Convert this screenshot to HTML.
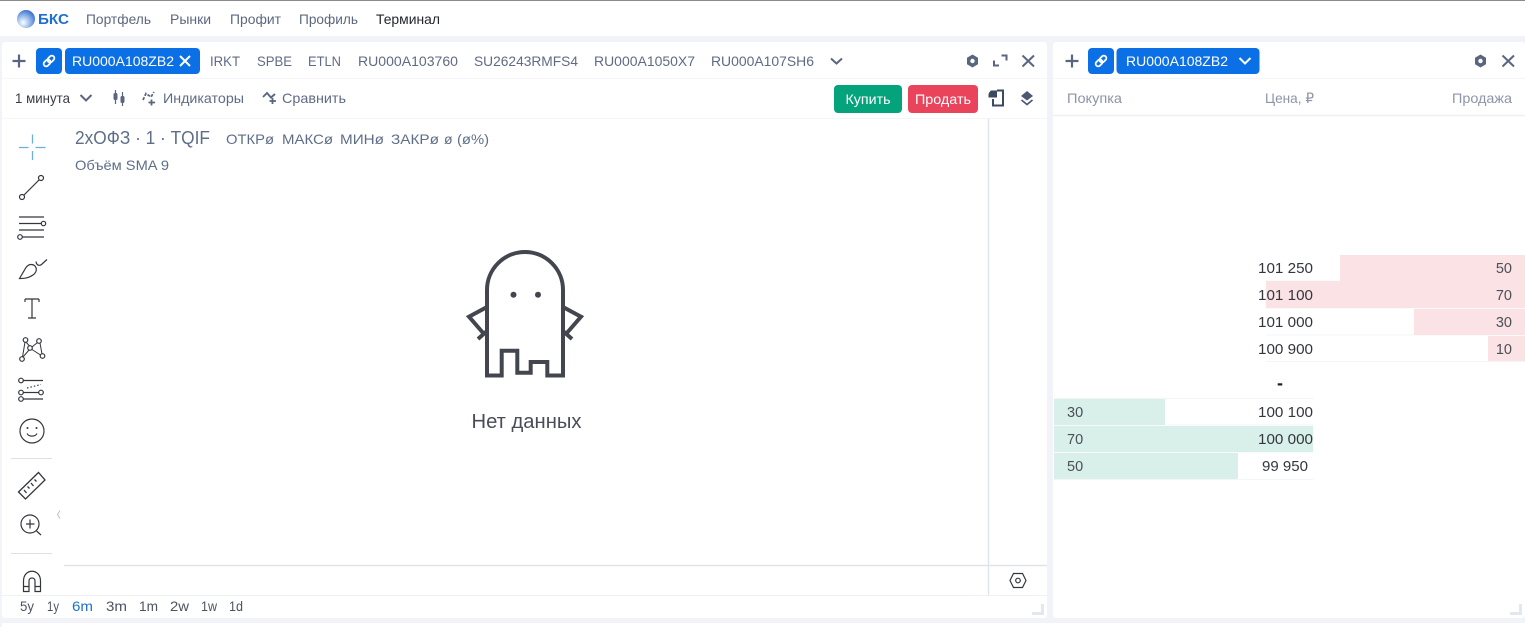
<!DOCTYPE html>
<html lang="ru"><head><meta charset="utf-8"><title>Терминал</title>
<style>
html,body{margin:0;padding:0;background:#f1f3f8;width:1525px;height:627px;overflow:hidden}
svg{display:block;position:absolute;left:0;top:0}
text{font-family:"Liberation Sans","DejaVu Sans",sans-serif;dominant-baseline:alphabetic}
.n{font-size:14px;fill:#5d6880}
.t{font-size:14px;fill:#5f6b85}
.w{font-size:14px;fill:#fff}
.h{font-size:14px;fill:#8b94a8}
.p{font-size:15px;fill:#33363d}
.q{font-size:14.5px;fill:#4b4f57}
.f{font-size:14px;fill:#4c5362}
.l{font-size:14px;fill:#5f6e88}
.ic{fill:none;stroke:#33363d;stroke-width:1.2}
.ui{fill:none;stroke:#5a6680;stroke-width:2}
</style></head><body>
<svg width="1525" height="627" viewBox="0 0 1525 627" xmlns="http://www.w3.org/2000/svg">
<defs><radialGradient id="g" cx="0.35" cy="0.7" r="0.8"><stop offset="0" stop-color="#fff"/><stop offset="0.5" stop-color="#8fb4ea"/><stop offset="1" stop-color="#2a62c4"/></radialGradient></defs>
<rect width="1525" height="627" fill="#f1f3f8"/>
<rect width="1525" height="36" fill="#fff"/><rect width="1525" height="1" fill="#8a8a8a"/>
<circle cx="26" cy="19" r="9" fill="url(#g)"/>
<text x="38" y="24" font-size="14.5" font-weight="700" fill="#1f6fd0" textLength="31" lengthAdjust="spacingAndGlyphs">БКС</text>
<text class="n" x="86" y="24" textLength="65" lengthAdjust="spacingAndGlyphs">Портфель</text>
<text class="n" x="170" y="24" textLength="41" lengthAdjust="spacingAndGlyphs">Рынки</text>
<text class="n" x="230" y="24" textLength="51" lengthAdjust="spacingAndGlyphs">Профит</text>
<text class="n" x="299" y="24" textLength="59" lengthAdjust="spacingAndGlyphs">Профиль</text>
<text x="376" y="24" font-size="14" fill="#24272e" textLength="64" lengthAdjust="spacingAndGlyphs">Терминал</text>

<rect x="2" y="42" width="1045" height="576" rx="3" fill="#fff"/>
<rect x="1053" y="42" width="472" height="576" rx="3" fill="#fff"/>
<rect x="2" y="623" width="1523" height="4" fill="#fff"/>
<path d="M2 78.5H1047M2 118.5H1047M1053 78.5H1525" stroke="#f3f5f9"/>
<path d="M1053 115.5H1525" stroke="#eef0f5" stroke-width="1.5"/>
<path d="M988.5 119V595M64 565.5H1047" stroke="#dfe4ec" stroke-width="1.4"/>
<path d="M2 595.5H1047" stroke="#eef1f5"/>

<!-- left tabs -->
<path d="M19 54.5V67.5M12.5 61H25.5" stroke="#5a6680" stroke-width="2.2"/>
<rect x="36" y="48" width="26" height="26" rx="4" fill="#0b6fe6"/>
<g transform="rotate(-45 49 61)" fill="none" stroke="#fff" stroke-width="1.8"><rect x="42.500" y="58.500" width="7.500" height="5" rx="2.500"/><rect x="48" y="58.500" width="7.500" height="5" rx="2.500"/></g>
<rect x="65" y="48" width="135" height="26" rx="4" fill="#0b6fe6"/>
<text class="w" x="72" y="66" textLength="102" lengthAdjust="spacingAndGlyphs">RU000A108ZB2</text>
<path d="M180 56L190 66M190 56L180 66" stroke="#fff" stroke-width="2"/>
<text class="t" x="210" y="66" textLength="30" lengthAdjust="spacingAndGlyphs">IRKT</text>
<text class="t" x="257" y="66" textLength="35" lengthAdjust="spacingAndGlyphs">SPBE</text>
<text class="t" x="308" y="66" textLength="33" lengthAdjust="spacingAndGlyphs">ETLN</text>
<text class="t" x="358" y="66" textLength="100" lengthAdjust="spacingAndGlyphs">RU000A103760</text>
<text class="t" x="474" y="66" textLength="104" lengthAdjust="spacingAndGlyphs">SU26243RMFS4</text>
<text class="t" x="594" y="66" textLength="101" lengthAdjust="spacingAndGlyphs">RU000A1050X7</text>
<text class="t" x="711" y="66" textLength="103" lengthAdjust="spacingAndGlyphs">RU000A107SH6</text>
<path d="M831 58.500L836.500 63.500L842 58.500" class="ui" stroke-width="1.7"/>
<path d="M972.500 54.500L978 57.700V64.300L972.500 67.500L967 64.300V57.700Z" fill="#5a6680"/><circle cx="972.500" cy="61" r="2.200" fill="#fff"/>
<path d="M994 60.500V65.500H999M1001.500 55.500H1006.500V60.500" class="ui" stroke="#4f5b75"/>
<path d="M1022.500 55.500L1034 66.500M1034 55.500L1022.500 66.500" class="ui" stroke-width="2.100"/>

<!-- toolbar -->
<text x="15" y="103" font-size="14" fill="#383c45" textLength="55" lengthAdjust="spacingAndGlyphs">1 минута</text>
<path d="M80.500 95L86 100.500L91.500 95" class="ui" stroke-width="1.700" stroke="#6a7590"/>
<path d="M115.500 90V104M122.500 92V106" stroke="#5a6680" stroke-width="1.200"/>
<rect x="113.500" y="93" width="4" height="7" rx="1.500" fill="#5a6680"/><rect x="120.500" y="96" width="4" height="7" rx="1.500" fill="#5a6680"/>
<path d="M143 100L146 93.500L151 97L154 92" fill="none" stroke="#5a6680" stroke-width="1.800" stroke-dasharray="3 1.500"/><path d="M151.500 99.500V105.500M148.500 102.500H155" stroke="#5a6680" stroke-width="1.800"/>
<text class="t" x="163" y="103" textLength="81" lengthAdjust="spacingAndGlyphs">Индикаторы</text>
<path d="M263 97L267 93L271 97.500L275 94" fill="none" stroke="#5a6680" stroke-width="1.900"/><path d="M272.500 98V104M269.500 101H276" stroke="#5a6680" stroke-width="1.800"/>
<text class="t" x="282" y="103" textLength="64" lengthAdjust="spacingAndGlyphs">Сравнить</text>
<rect x="834" y="85" width="68" height="28" rx="4" fill="#05a37c"/>
<text x="845.500" y="104" font-size="14" fill="#fff" textLength="45" lengthAdjust="spacingAndGlyphs">Купить</text>
<rect x="908" y="85" width="70" height="28" rx="4" fill="#e9445c"/>
<text x="915" y="104" font-size="14" fill="#fff" textLength="56" lengthAdjust="spacingAndGlyphs">Продать</text>
<path d="M997 90.500H1003V105.500H993V99" fill="none" stroke="#3b4a62" stroke-width="2"/><path d="M988.500 94.500Q989 92 991 90.500H997V97.500H988.500Z" fill="#3b4a62"/>
<path d="M1027 91L1033 96L1027 100.500L1021 96Z" fill="#4d5973"/><path d="M1021.500 100L1027 104.500L1032.500 100" fill="none" stroke="#4d5973" stroke-width="1.700"/>

<!-- left tools -->
<path d="M19 147.500H28.500M35.500 147.500H45.500M32.500 134.500V143.500M32.500 151V160" stroke="#6aaedb" stroke-width="1.300"/>
<g class="ic">
<path d="M24 195L39 180"/><circle cx="22" cy="197" r="2.500"/><circle cx="41" cy="178" r="2.500"/>
<path d="M19 217H44M19 223.500H41M19 230H44M22.500 237H44"/><circle cx="43.500" cy="223.500" r="2.200"/><circle cx="20" cy="237" r="2.300"/>
<path d="M19.500 278.500L26 267.500C29 263.500 33 264 35 266C37 268.500 37 272 33 275C28 278.500 23 278.500 19.500 278.500Z"/><path d="M36 261.500C36.500 265.500 39.500 266 41.500 264.500L47 259.500"/>
<path d="M25 299H39M25 299V302M39 299V302M32 299V318M28 318H36"/>
<circle cx="25.500" cy="340" r="2.300"/><circle cx="22" cy="359" r="2.300"/><circle cx="30" cy="348" r="2.300"/><circle cx="39" cy="341" r="2.300"/><circle cx="42.500" cy="356" r="2.300"/>
<path d="M25 342L22.500 357M26 342L29.500 346M23 357L29 350M32 347L37.500 342.500M40 343L42 354M32 349.500L40.500 355" stroke-width="1"/>
<circle cx="21" cy="380.500" r="2.300"/><path d="M23.500 380.500H43"/>
<circle cx="21" cy="392.500" r="2.300"/><circle cx="41" cy="392.500" r="2.300"/><path d="M23.500 392.500H38.500"/>
<circle cx="21" cy="399" r="2.300"/><path d="M23.500 399H43"/>
<path d="M27 388L41 384.500" stroke-dasharray="1.500 2"/>
<circle cx="32" cy="431" r="12"/><path d="M27 433.500C29 437 35 437 37 433.500"/>
<path d="M18.500 492L38.500 472.500L45 480L25.500 499Z M24 490L26.500 493M27.500 486.500L29.500 488.500M31 483L33.500 486M34.500 479.500L36.500 481.500" stroke-width="1.300"/>
<circle cx="30" cy="524" r="9"/><path d="M26 524H34.500M30 519.500V528.500M36.500 531L41 535"/>
<path d="M23.500 591.500V581C23.500 568 40.500 568 40.500 581V591.500H35V581C35 577 29 577 29 581V591.500ZM23.500 586.500H29M35 586.500H40.500"/>
</g>
<circle cx="27.500" cy="428" r="1" fill="#33363d"/><circle cx="36.500" cy="428" r="1" fill="#33363d"/>
<path d="M11 458.500H52M11 553.500H52" stroke="#dde0e6"/>
<path d="M60 510.500L57.500 514.500L60 518.500" fill="none" stroke="#b9bfcb" stroke-width="1"/>

<!-- legend -->
<text x="75" y="144" font-size="18" fill="#5f6e88" textLength="135" lengthAdjust="spacingAndGlyphs">2хОФЗ · 1 · TQIF</text>
<text class="l" x="226" y="144" textLength="48" lengthAdjust="spacingAndGlyphs">ОТКРø</text>
<text class="l" x="282" y="144" textLength="51" lengthAdjust="spacingAndGlyphs">МАКСø</text>
<text class="l" x="340" y="144" textLength="44" lengthAdjust="spacingAndGlyphs">МИНø</text>
<text class="l" x="391" y="144" textLength="48" lengthAdjust="spacingAndGlyphs">ЗАКРø</text>
<text class="l" x="444" y="144">ø</text>
<text class="l" x="457" y="144" textLength="32" lengthAdjust="spacingAndGlyphs">(ø%)</text>
<text class="l" x="75" y="170" textLength="94" lengthAdjust="spacingAndGlyphs">Объём SMA 9</text>

<!-- ghost -->
<g fill="none" stroke="#44464f" stroke-width="4">
<path d="M487 375.500V290A38 38 0 0 1 563 290V375.500H547.300V362H530.700V372.700H517.300V350.700H501.700V375.500Z"/>
<path d="M487 307L469 316.700L484 334M478 339L487 331M563 307L581 316.700L566 334M572 339L563 331"/>
</g>
<circle cx="513.500" cy="294.700" r="3" fill="#44464f"/><circle cx="538" cy="294.700" r="3" fill="#44464f"/>
<text x="471.500" y="428" font-size="20" fill="#4a4d57" textLength="110" lengthAdjust="spacingAndGlyphs">Нет данных</text>

<!-- hex -->
<path d="M1013.500 573.500H1022.500L1026 580.500L1022.500 587.500H1013.500L1010 580.500Z" fill="none" stroke="#33363d" stroke-width="1.200"/><circle cx="1018" cy="580.500" r="2.300" fill="none" stroke="#33363d" stroke-width="1.200"/>

<!-- timeframes -->
<text class="f" x="20" y="611" textLength="14" lengthAdjust="spacingAndGlyphs">5y</text>
<text class="f" x="47" y="611" textLength="12" lengthAdjust="spacingAndGlyphs">1y</text>
<text x="72" y="611" font-size="14" fill="#1d72c9" textLength="21" lengthAdjust="spacingAndGlyphs">6m</text>
<text class="f" x="106" y="611" textLength="21" lengthAdjust="spacingAndGlyphs">3m</text>
<text class="f" x="139" y="611" textLength="19" lengthAdjust="spacingAndGlyphs">1m</text>
<text class="f" x="170" y="611" textLength="19" lengthAdjust="spacingAndGlyphs">2w</text>
<text class="f" x="201" y="611" textLength="16" lengthAdjust="spacingAndGlyphs">1w</text>
<text class="f" x="229" y="611" textLength="14" lengthAdjust="spacingAndGlyphs">1d</text>
<path d="M1032 613.500H1042.500V604M1510 613.500H1520.500V604" fill="none" stroke="#e3e7ee" stroke-width="3"/>

<!-- right panel -->
<path d="M1072 54.500V67.500M1065.500 61H1078.500" stroke="#5a6680" stroke-width="2.200"/>
<rect x="1088" y="48" width="26" height="26" rx="4" fill="#0b6fe6"/>
<g transform="rotate(-45 1101 61)" fill="none" stroke="#fff" stroke-width="1.8"><rect x="1094.500" y="58.500" width="7.500" height="5" rx="2.500"/><rect x="1100" y="58.500" width="7.500" height="5" rx="2.500"/></g>
<rect x="1116.500" y="48" width="143" height="26" rx="4" fill="#0b6fe6"/>
<text class="w" x="1126" y="66" textLength="102" lengthAdjust="spacingAndGlyphs">RU000A108ZB2</text>
<path d="M1239.500 58L1245 63.500L1250.500 58" fill="none" stroke="#fff" stroke-width="2"/>
<path d="M1480.500 54.500L1486 57.700V64.300L1480.500 67.500L1475 64.300V57.700Z" fill="#5a6680"/><circle cx="1480.500" cy="61" r="2.200" fill="#fff"/>
<path d="M1502.500 55.500L1514 66.500M1514 55.500L1502.500 66.500" class="ui" stroke-width="2.100"/>
<text class="h" x="1067" y="103" textLength="55" lengthAdjust="spacingAndGlyphs">Покупка</text>
<text class="h" x="1265" y="103" textLength="49" lengthAdjust="spacingAndGlyphs">Цена, ₽</text>
<text class="h" x="1452" y="103" textLength="60" lengthAdjust="spacingAndGlyphs">Продажа</text>

<path d="M1266 281H1525M1266 308H1525M1266 335H1525M1266 361.500H1525M1054 398.500H1313M1054 425H1313M1054 452H1313M1054 479.500H1313" stroke="#f3f5f8"/>
<g fill="#fbe3e5"><rect x="1340" y="255" width="185" height="26"/><rect x="1266" y="281" width="259" height="27"/><rect x="1414" y="309" width="111" height="26"/><rect x="1488" y="336" width="37" height="25"/></g>
<g fill="#d9f0ea"><rect x="1054" y="399" width="111" height="26"/><rect x="1054" y="426" width="259" height="26"/><rect x="1054" y="453" width="184" height="26"/></g>
<text class="p" x="1258" y="273" textLength="55" lengthAdjust="spacingAndGlyphs">101 250</text>
<text class="p" x="1258" y="300" textLength="55" lengthAdjust="spacingAndGlyphs">101 100</text>
<text class="p" x="1258" y="327" textLength="55" lengthAdjust="spacingAndGlyphs">101 000</text>
<text class="p" x="1258" y="354" textLength="55" lengthAdjust="spacingAndGlyphs">100 900</text>
<text class="p" x="1258" y="417" textLength="55" lengthAdjust="spacingAndGlyphs">100 100</text>
<text class="p" x="1258" y="444" textLength="55" lengthAdjust="spacingAndGlyphs">100 000</text>
<text class="p" x="1262" y="471" textLength="46" lengthAdjust="spacingAndGlyphs">99 950</text>
<g text-anchor="end"><text class="q" x="1512" y="273">50</text><text class="q" x="1512" y="300">70</text><text class="q" x="1512" y="327">30</text><text class="q" x="1512" y="354">10</text></g>
<text class="q" x="1067" y="417">30</text><text class="q" x="1067" y="444">70</text><text class="q" x="1067" y="471">50</text>
<text x="1280" y="389" font-size="18" font-weight="700" fill="#1c1e24" text-anchor="middle">-</text>
</svg>
</body></html>
